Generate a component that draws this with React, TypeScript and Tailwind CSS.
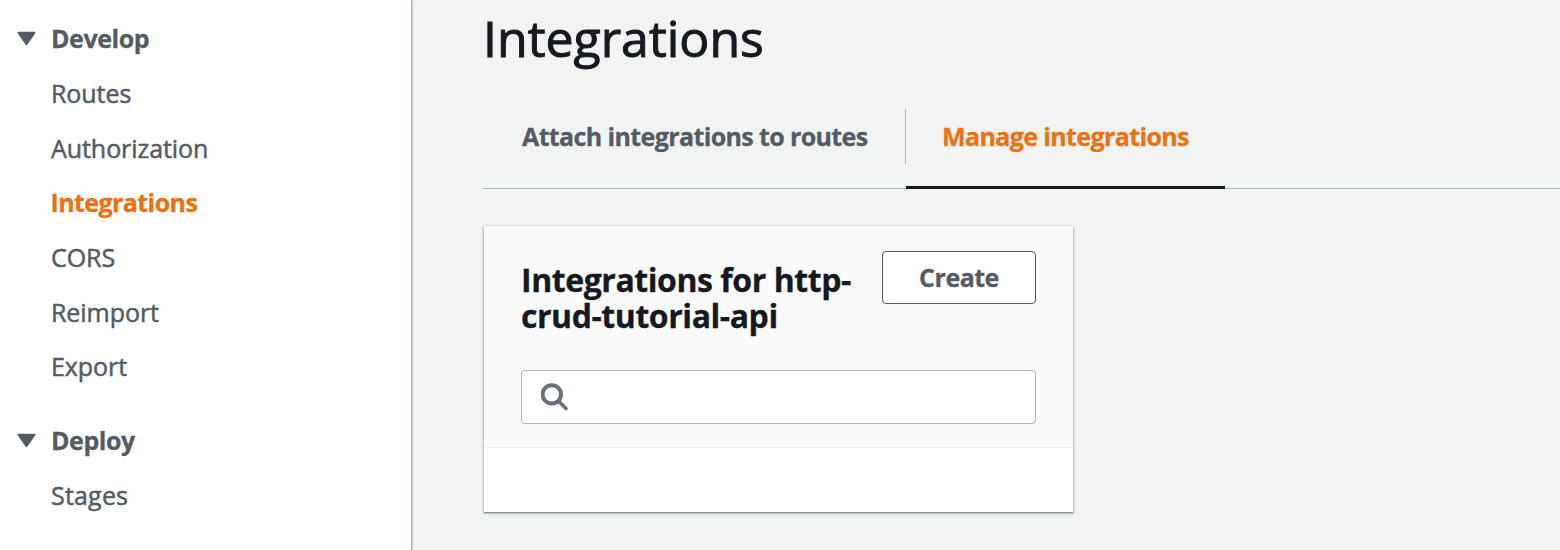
const items = [
  { label: "Routes" },
  { label: "Authorization" },
  { label: "Integrations", active: true },
  { label: "CORS" },
  { label: "Reimport" },
  { label: "Export" },
];

function Caret() {
  return (
    <svg width="20" height="16" viewBox="0 0 20 16" className="-mt-[1px] shrink-0">
      <path d="M1.5 1.7h16L9.5 13.3z" fill="#545b64" stroke="#545b64" strokeWidth="2" strokeLinejoin="round" />
    </svg>
  );
}

function Section({ title }: { title: string }) {
  return (
    <div className="flex h-[55px] items-center pl-[17px]">
      <Caret />
      <span className="ml-[14px] pb-[2px] text-[25px] font-bold tracking-[-0.45px] [-webkit-text-stroke:0.3px]">{title}</span>
    </div>
  );
}

export default function App() {
  return (
    <div className="flex h-[550px] w-[1560px] overflow-hidden bg-[#f2f3f3] font-['Open_Sans',sans-serif] text-[#545b64]">
      <nav className="w-[411px] shrink-0 bg-white pt-[12px] shadow-[1px_0_2px_#879596]">
        <Section title="Develop" />
        <ul>
          {items.map((i) => (
            <li
              key={i.label}
              className={
                i.active
                  ? "h-[54.7px] pl-[50.5px] text-[25px] leading-[52.7px] font-bold tracking-[-0.58px] text-[#ec7211] [-webkit-text-stroke:0.3px]"
                  : "h-[54.7px] pl-[51px] text-[25px] leading-[52.7px] tracking-[-0.06px] [-webkit-text-stroke:0.5px]"
              }
            >
              {i.label}
            </li>
          ))}
        </ul>
        <div className="h-[19px]" />
        <Section title="Deploy" />
        <div className="pl-[51px] text-[25px] leading-[53px] tracking-[0.2px] [-webkit-text-stroke:0.5px]">Stages</div>
      </nav>
      <main className="ml-[72px] flex-1">
        <h1 className="h-[109px] pt-[6px] text-[50px] leading-[64px] text-[#16191f] [-webkit-text-stroke:1px]">Integrations</h1>
        <div className="flex h-[80px] border-b border-[#aab7b8] text-[25px] font-bold tracking-[-0.62px] whitespace-nowrap [-webkit-text-stroke:0.3px]">
          <div className="h-[55px] w-[423px] border-r border-[#aab7b8] pl-[39px] leading-[54px]">Attach integrations to routes</div>
          <div className="h-[80px] w-[319px] border-b-3 border-[#16191f] pl-[36px] leading-[54px] text-[#ec7211]">Manage integrations</div>
        </div>
        <section className="mt-[37px] ml-[1px] h-[286px] w-[589px] bg-white shadow-[0_1px_1px_#879596,0_1px_3px_#879596]">
          <div className="h-[222px] border-b border-[#eaeded] bg-[#fafafa] px-[37px] pt-[25px]">
            <div className="flex justify-between">
              <h2 className="w-[340px] pt-[11px] text-[32px] leading-[36px] font-bold tracking-[-0.44px] whitespace-nowrap text-[#16191f] [-webkit-text-stroke:0.3px]">
                Integrations for http-
                <br />
                crud-tutorial-api
              </h2>
              <button className="h-[53px] w-[154px] shrink-0 rounded-[4px] border border-[#545b64] bg-white text-[25px] font-bold tracking-[-0.5px] [-webkit-text-stroke:0.3px]">Create</button>
            </div>
            <div className="mt-[36px] flex h-[54px] items-center rounded-[4px] border border-[#aab7b8] bg-white pl-[19px]">
              <svg width="28" height="28" viewBox="0 0 28 28" fill="none" stroke="#687078" strokeWidth="4">
                <circle cx="10.8" cy="11.4" r="9.2" />
                <path d="m17.5 18 7.5 7.5" strokeLinecap="round" strokeWidth="3.6" />
              </svg>
            </div>
          </div>
        </section>
      </main>
    </div>
  );
}
